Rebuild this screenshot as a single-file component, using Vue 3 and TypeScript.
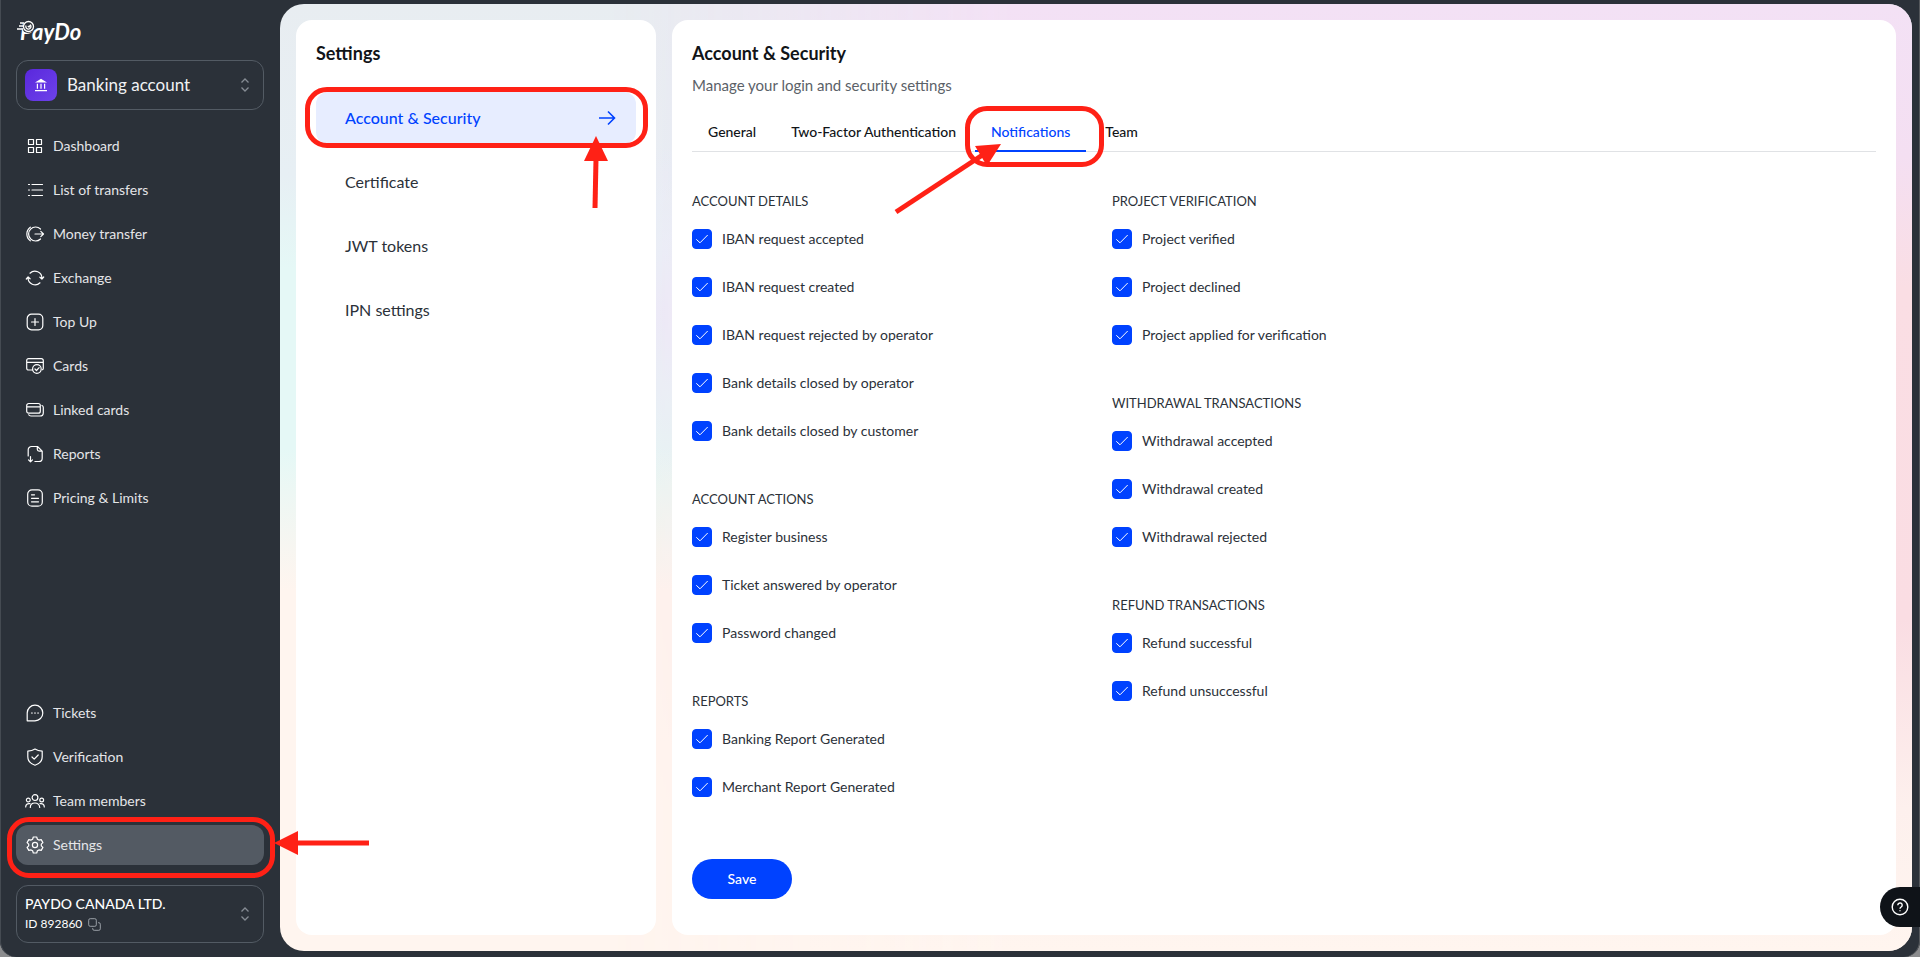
<script setup lang="ts">
import { reactive, ref } from 'vue'

interface NavItem {
  label: string
  icon: string
}

interface CheckGroup {
  title: string
  items: string[]
}

const mainNav: NavItem[] = [
  {
    label: 'Dashboard',
    icon: 'M3.5 3.5h5v5h-5zM11.5 3.5h5v5h-5zM3.5 11.5h5v5h-5zM11.5 11.5h5v5h-5z',
  },
  {
    label: 'List of transfers',
    icon: 'M7 4.5h10.500M7 10h10.500M7 15.500h10.500M3.500 4.500h1M3.500 10h1M3.500 15.500h1',
  },
  {
    label: 'Money transfer',
    icon: 'M15.500 5A7 7 0 1 0 15.500 15M10 10h8.500M15.800 7.300l2.700 2.700-2.700 2.700M5.300 3.200C.700 6.500.700 13.500 5.300 16.800',
  },
  {
    label: 'Exchange',
    icon: 'M5 5.200A7 7 0 0 1 16.900 10.500M15 14.800A7 7 0 0 1 3.100 9.500M1.300 11l1.800-2 2 1.800M18.700 9l-1.800 2-2-1.800',
  },
  {
    label: 'Top Up',
    icon: 'M6.500 2.200h7a4.300 4.300 0 0 1 4.300 4.300v7a4.300 4.300 0 0 1-4.300 4.300h-7a4.300 4.300 0 0 1-4.300-4.300v-7a4.300 4.300 0 0 1 4.300-4.300zM10 6.500v7M6.500 10h7',
  },
  {
    label: 'Cards',
    icon: 'M7 14H3.500A1.800 1.800 0 0 1 1.700 12.200V4.500A1.800 1.800 0 0 1 3.500 2.700h13a1.800 1.800 0 0 1 1.800 1.800v7.700q0 1-.800 1.500M1.700 6.300h16.600M16.200 13a4.300 4.300 0 1 1-8.600 0a4.300 4.300 0 1 1 8.600 0M10 13l1.500 1.500 2.600-2.800',
  },
  {
    label: 'Linked cards',
    icon: 'M3.700 3.500h9.600a2 2 0 0 1 2 2v5.700a2 2 0 0 1-2 2H3.700a2 2 0 0 1-2-2V5.500a2 2 0 0 1 2-2zM1.700 6.800h13.600M17 5.500q1.300.600 1.300 2v5.200a3.300 3.300 0 0 1-3.300 3.300H6q-1.600 0-2.300-1.200',
  },
  {
    label: 'Reports',
    icon: 'M3.200 12V5.800a3.300 3.300 0 0 1 3.300-3.300h6l4.700 4.700v7a3.300 3.300 0 0 1-3.300 3.300h-4M12.300 2.700v2.600a1.800 1.800 0 0 0 1.800 1.800h3M5.500 12.500v5.300M3.500 15.800l2 2 2-2',
  },
  {
    label: 'Pricing & Limits',
    icon: 'M7 1.800h6a4.300 4.300 0 0 1 4.300 4.300v7.800a4.300 4.300 0 0 1-4.300 4.300H7a4.300 4.300 0 0 1-4.300-4.300V6.100A4.300 4.300 0 0 1 7 1.800zM6.500 6.800h3M6.500 10.300h7M6.500 13.800h7',
  },
]

const lowerNav: NavItem[] = [
  {
    label: 'Tickets',
    icon: 'M2.200 17.800V10A7.800 7.800 0 1 1 10 17.800zM6.500 10h.800M9.600 10h.800M12.700 10h.800',
  },
  {
    label: 'Verification',
    icon: 'M10 2c2.200 1.400 4.500 2 7.200 2.200v5.500c0 4-2.700 7-7.200 8.500-4.500-1.500-7.200-4.500-7.200-8.500V4.200C5.500 4 7.800 3.400 10 2zM7 10l2.200 2.200 4-4.200',
  },
  {
    label: 'Team members',
    icon: 'M12.900 6.600a2.900 2.900 0 1 1-5.800 0a2.900 2.900 0 1 1 5.800 0M5.200 9a1.900 1.900 0 1 1-3.800 0a1.900 1.900 0 1 1 3.800 0M18.600 9a1.900 1.900 0 1 1-3.800 0a1.900 1.900 0 1 1 3.800 0M5.300 16.500c0-6 9.400-6 9.400 0M.700 16c0-2.500 1.700-3.800 4.300-3.300M19.300 16c0-2.500-1.700-3.800-4.300-3.300',
  },
  {
    label: 'Settings',
    icon: 'M8.300 2h3.400l.700 2.200 1.500.900 2.300-.500 1.700 3-1.600 1.600v1.600l1.600 1.600-1.700 3-2.300-.500-1.500.900-.700 2.200H8.300l-.700-2.200-1.500-.900-2.300.500-1.700-3 1.600-1.600V9.200L2.100 7.600l1.700-3 2.300.500 1.500-.900zM12.600 10a2.600 2.600 0 1 1-5.200 0a2.600 2.600 0 1 1 5.200 0',
  },
]

const sections = ['Account & Security', 'Certificate', 'JWT tokens', 'IPN settings']
const tabs = ['General', 'Two-Factor Authentication', 'Notifications', 'Team']

const activeNav = ref('Settings')
const activeSection = ref('Account & Security')
const activeTab = ref('Notifications')

const columns: CheckGroup[][] = [
  [
    {
      title: 'ACCOUNT DETAILS',
      items: [
        'IBAN request accepted',
        'IBAN request created',
        'IBAN request rejected by operator',
        'Bank details closed by operator',
        'Bank details closed by customer',
      ],
    },
    {
      title: 'ACCOUNT ACTIONS',
      items: ['Register business', 'Ticket answered by operator', 'Password changed'],
    },
    { title: 'REPORTS', items: ['Banking Report Generated', 'Merchant Report Generated'] },
  ],
  [
    {
      title: 'PROJECT VERIFICATION',
      items: ['Project verified', 'Project declined', 'Project applied for verification'],
    },
    {
      title: 'WITHDRAWAL TRANSACTIONS',
      items: ['Withdrawal accepted', 'Withdrawal created', 'Withdrawal rejected'],
    },
    { title: 'REFUND TRANSACTIONS', items: ['Refund successful', 'Refund unsuccessful'] },
  ],
]

const checked = reactive<Record<string, boolean>>({})
columns.flat().forEach((group) => group.items.forEach((item) => (checked[item] = true)))
</script>

<template>
  <div class="app">
    <aside class="sidebar">
      <a href="#" class="logo" aria-label="PayDo">
        <svg width="72" height="30" viewBox="0 0 72 30">
          <text x="4" y="24" class="logo-text">PayDo</text>
          <circle cx="12" cy="11" r="6" class="logo-disc" />
          <g class="logo-swirl">
            <circle cx="12.500" cy="10.500" r="5" />
            <path d="M10 9.500a2.600 2.600 0 1 0 4.500-.600M11.800 10l1.200 1 1.800-2.400M1 13h6M4 7h4M3 10h4" />
          </g>
        </svg>
      </a>

      <button type="button" class="picker account-picker">
        <span class="bank-badge">
          <svg width="14" height="14" viewBox="0 0 14 14">
            <path d="M1 4.500 7 .700l6 3.800zM2.800 5.800h1.200v5H2.800zM6.400 5.800h1.200v5H6.400zM10 5.800h1.200v5H10zM1 12h12v1.300H1z" fill="#fff" />
          </svg>
        </span>
        <span class="picker-title">Banking account</span>
        <svg class="chevrons" width="10" height="16" viewBox="0 0 10 16"><path d="M1.500 5.500 5 2l3.500 3.500M1.500 10.500 5 14l3.500-3.500" /></svg>
      </button>

      <nav class="nav" aria-label="Main">
        <a
          v-for="item in mainNav"
          :key="item.label"
          href="#"
          class="nav-item"
          :class="{ active: item.label === activeNav }"
          @click.prevent="activeNav = item.label"
        >
          <svg class="nav-icon" width="20" height="20" viewBox="0 0 20 20"><path :d="item.icon" /></svg>
          {{ item.label }}
        </a>
      </nav>

      <nav class="nav lower" aria-label="Support and settings">
        <a
          v-for="item in lowerNav"
          :key="item.label"
          href="#"
          class="nav-item"
          :class="{ active: item.label === activeNav }"
          @click.prevent="activeNav = item.label"
        >
          <svg class="nav-icon" width="20" height="20" viewBox="0 0 20 20"><path :d="item.icon" /></svg>
          {{ item.label }}
          <span v-if="item.label === 'Settings'" class="mark mark-nav">
            <svg class="pointer" width="98" height="26" viewBox="0 0 98 26">
              <path d="M22 13H95" class="shaft" />
              <path d="M0 13 24 1v24z" class="head" />
            </svg>
          </span>
        </a>
      </nav>

      <button type="button" class="picker company-picker">
        <span class="company">
          <span class="company-name">PAYDO CANADA LTD.</span>
          <span class="company-id">
            ID 892860
            <svg width="13" height="13" viewBox="0 0 13 13"><path d="M2.200.700h4.600a1.500 1.500 0 0 1 1.500 1.500v4.600a1.500 1.500 0 0 1-1.500 1.500H2.200A1.500 1.500 0 0 1 .700 6.800V2.200A1.500 1.500 0 0 1 2.200.700zM10 4.700h.800a1.500 1.500 0 0 1 1.500 1.500v4.600a1.500 1.500 0 0 1-1.500 1.500H6.200a1.500 1.500 0 0 1-1.500-1.500V10" /></svg>
          </span>
        </span>
        <svg class="chevrons" width="10" height="16" viewBox="0 0 10 16"><path d="M1.500 5.500 5 2l3.500 3.500M1.500 10.500 5 14l3.500-3.500" /></svg>
      </button>
    </aside>

    <div class="stage">
      <section class="panel side-panel">
        <h2 class="panel-title">Settings</h2>
        <nav class="section-list" aria-label="Settings sections">
          <a
            v-for="name in sections"
            :key="name"
            href="#"
            class="section-item"
            :class="{ active: name === activeSection }"
            @click.prevent="activeSection = name"
          >
            {{ name }}
            <svg v-if="name === activeSection" class="section-arrow" width="18" height="16" viewBox="0 0 18 16"><path d="M1 8h15.500M10 1.500 16.500 8 10 14.500" /></svg>
            <span v-if="name === 'Account & Security'" class="mark mark-section">
              <svg class="pointer" width="26" height="74" viewBox="0 0 26 74">
                <path d="M13 23 12 72" class="shaft" />
                <path d="M13 0 25 25H1z" class="head" />
              </svg>
            </span>
          </a>
        </nav>
      </section>

      <main class="panel main-panel">
        <h1 class="panel-title">Account &amp; Security</h1>
        <p class="subtitle">Manage your login and security settings</p>

        <div class="tabs" role="tablist">
          <button
            v-for="tab in tabs"
            :key="tab"
            type="button"
            role="tab"
            class="tab"
            :class="{ active: tab === activeTab }"
            :aria-selected="tab === activeTab"
            @click="activeTab = tab"
          >
            {{ tab }}
            <span v-if="tab === 'Notifications'" class="mark mark-tab">
              <svg class="pointer" width="110" height="74" viewBox="0 0 110 74">
                <path d="M2 70 90 12" class="shaft" />
                <path d="M107 2 81 4 93 24z" class="head" />
              </svg>
            </span>
          </button>
        </div>

        <form @submit.prevent>
          <div class="columns">
            <div v-for="(column, index) in columns" :key="index" class="column">
              <fieldset v-for="group in column" :key="group.title" class="group">
                <legend class="group-title">{{ group.title }}</legend>
                <label v-for="item in group.items" :key="item" class="check">
                  <input v-model="checked[item]" type="checkbox" class="check-input" />
                  <svg class="check-tick" width="20" height="20" viewBox="0 0 20 20"><path d="M4.300 10.300 8 13.800l7.700-7.800" /></svg>
                  <span>{{ item }}</span>
                </label>
              </fieldset>
            </div>
          </div>
          <button type="submit" class="save">Save</button>
        </form>
      </main>
    </div>

    <button type="button" class="help" aria-label="Help">
      <svg width="18" height="18" viewBox="0 0 18 18">
        <circle cx="9" cy="9" r="7.800" />
        <path d="M6.800 7.200a2.200 2.200 0 1 1 3.400 1.800c-.800.500-1.200.900-1.200 1.700M9 12.300v1" />
      </svg>
    </button>
  </div>
</template>

<style>
body {
  background: #8b8c8e;
}
</style>

<style scoped>
* {
  box-sizing: border-box;
}

.app {
  position: relative;
  display: flex;
  min-height: 100vh;
  padding: 4px 8px 6px 0;
  overflow: hidden;
  background: #2b3139;
  border-radius: 0 0 16px 16px;
  box-shadow: inset 1px 0 #454b52, inset -1px 0 #55585c;
  color: #2b3139;
  font-family: Lato, "Open Sans", sans-serif;
  font-size: 14px;
  line-height: 20px;
}

button {
  font: inherit;
  cursor: pointer;
}

a {
  color: inherit;
  text-decoration: none;
}

/* Sidebar */
.sidebar {
  position: relative;
  z-index: 1;
  display: flex;
  flex-direction: column;
  flex: 0 0 280px;
  padding: 12px 16px 8px;
}

.logo {
  height: 44px;
}

.logo svg {
  display: block;
}

.logo-text {
  fill: #fff;
  font-size: 22px;
  font-style: italic;
  font-weight: 700;
}

.logo-disc {
  fill: #2b3139;
}

.logo-swirl {
  fill: none;
  stroke: #fff;
  stroke-width: 1.3;
}

.picker {
  display: flex;
  align-items: center;
  padding: 0 13px 0 8px;
  background: none;
  border: 1px solid #535b64;
  border-radius: 12px;
  color: #f1f2f4;
  text-align: left;
}

.account-picker {
  height: 50px;
  margin-bottom: 16px;
}

.bank-badge {
  display: flex;
  align-items: center;
  justify-content: center;
  width: 32px;
  height: 32px;
  margin-right: 10px;
  background: linear-gradient(135deg, #5a28dc, #6d42ea);
  border-radius: 8px;
}

.picker-title {
  flex: 1;
  font-size: 17px;
}

.chevrons {
  fill: none;
  stroke: #868c94;
  stroke-width: 1.3;
}

.nav {
  display: flex;
  flex-direction: column;
  gap: 4px;
}

.lower {
  margin-top: auto;
}

.nav-item {
  position: relative;
  display: flex;
  align-items: center;
  gap: 8px;
  height: 40px;
  padding: 0 9px;
  border-radius: 12px;
  color: #e4e5e8;
}

.nav-item.active {
  background: #535a63;
}

.nav-icon {
  fill: none;
  stroke: #fff;
  stroke-linecap: round;
  stroke-linejoin: round;
  stroke-width: 1.2;
}

.company-picker {
  height: 58px;
  margin-top: 20px;
}

.company {
  flex: 1;
  color: #fff;
  font-weight: 500;
}

.company-name {
  display: block;
}

.company-id {
  display: flex;
  align-items: center;
  gap: 6px;
  font-size: 12px;
  font-weight: 400;
}

.company-id svg {
  fill: none;
  stroke: #9aa0a7;
}

/* Content */
.stage {
  position: relative;
  isolation: isolate;
  display: flex;
  flex: 1;
  gap: 16px;
  min-width: 0;
  padding: 16px;
  overflow: hidden;
  background:
    radial-gradient(ellipse 300px 170px at 400px 310px, #ecebfa, rgba(236, 235, 250, 0)),
    linear-gradient(#e8edf1 0%, #e7eff4 18%, #e5f8f6 28%, #e5f8f6 47%, #fff5ef 62%, #fff5ef 100%);
  border-radius: 24px;
}

.stage::before {
  content: "";
  position: absolute;
  inset: 0;
  z-index: -1;
  background: linear-gradient(#f3e1f5 0%, #f4dff2 16%, #fadee4 30%, #fadde3 65%, #fdf0ed 85%, #fff5ef 100%);
  mask-image: linear-gradient(to right, transparent 20%, #000 45%);
}

.panel {
  padding: 20px;
  background: #fff;
  border-radius: 16px;
}

.side-panel {
  flex: 0 0 360px;
}

.main-panel {
  flex: 1;
  min-width: 0;
  padding-bottom: 36px;
}

.panel-title {
  margin: 0;
  color: #111418;
  font-size: 18px;
  font-weight: 700;
  line-height: 26px;
}

.section-list {
  display: flex;
  flex-direction: column;
  gap: 12px;
  margin-top: 26px;
}

.section-item {
  position: relative;
  display: flex;
  align-items: center;
  justify-content: space-between;
  height: 52px;
  padding: 0 20px 0 29px;
  border-radius: 12px;
  font-size: 16px;
}

.section-item.active {
  background: #e7edff;
  color: #0042ff;
  font-weight: 500;
}

.section-arrow {
  fill: none;
  stroke: #0042ff;
  stroke-width: 1.6;
}

.subtitle {
  margin: 9px 0 0;
  color: #5b6168;
  font-size: 15px;
}

.tabs {
  display: flex;
  gap: 3px;
  margin-top: 17px;
  border-bottom: 1px solid #e0e2e5;
}

.tab {
  position: relative;
  height: 40px;
  margin-bottom: -1px;
  padding: 2px 16px 0;
  background: none;
  border: 0;
  border-bottom: 2px solid transparent;
  color: #111418;
  font-weight: 500;
}

.tab.active {
  border-color: #0042ff;
  color: #0042ff;
}

/* Notification form */
.columns {
  display: grid;
  grid-template-columns: 400px 400px;
  gap: 20px;
  margin-top: 39px;
}

.column {
  display: flex;
  flex-direction: column;
  gap: 48px;
}

.group {
  display: flex;
  flex-direction: column;
  gap: 28px;
  margin: 0;
  padding: 0;
  border: 0;
}

.group-title {
  margin-bottom: 18px;
  padding: 0;
  font-size: 13px;
}

.check {
  position: relative;
  display: flex;
  align-items: center;
  gap: 10px;
  align-self: flex-start;
  cursor: pointer;
}

.check-input {
  appearance: none;
  width: 20px;
  height: 20px;
  margin: 0;
  border: 1px solid #b9bec5;
  border-radius: 4px;
}

.check-input:checked {
  background: #0042ff;
  border-color: #0042ff;
}

.check-tick {
  position: absolute;
  left: 0;
  fill: none;
  stroke: #fff;
  stroke-width: 1;
  pointer-events: none;
}

.save {
  width: 100px;
  height: 40px;
  margin-top: 62px;
  background: #0042ff;
  border: 0;
  border-radius: 20px;
  color: #fff;
  font-weight: 500;
}

.help {
  position: absolute;
  right: 0;
  bottom: 30px;
  display: flex;
  align-items: center;
  justify-content: center;
  width: 40px;
  height: 40px;
  padding: 0;
  background: #0f1318;
  border: 0;
  border-radius: 20px 0 0 20px;
}

.help svg {
  fill: none;
  stroke: #fff;
  stroke-width: 1.4;
}

/* Red callouts */
.mark {
  position: absolute;
  z-index: 2;
  border: 5px solid #ff2116;
  border-radius: 22px;
  pointer-events: none;
}

.mark-nav {
  inset: -8px -11px -13px -9px;
}

.mark-section {
  inset: -5px -12px -4px -11px;
}

.mark-tab {
  inset: -6px -18px -17px -10px;
}

.pointer {
  position: absolute;
}

.mark-nav .pointer {
  top: 8px;
  right: -102px;
}

.mark-section .pointer {
  top: 44px;
  right: 34px;
}

.mark-tab .pointer {
  top: 31px;
  right: 95px;
}

.shaft {
  fill: none;
  stroke: #ff2116;
  stroke-width: 5;
}

.head {
  fill: #ff2116;
}
</style>
